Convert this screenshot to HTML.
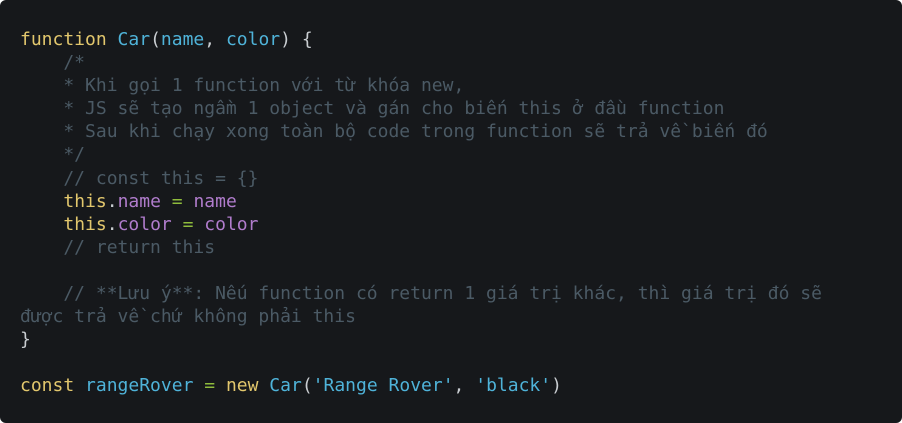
<!DOCTYPE html>
<html><head><meta charset="utf-8"><style>
html,body{margin:0;padding:0;background:#fff;width:902px;height:423px;overflow:hidden}
.box{position:absolute;left:0;top:0;width:902px;height:423px;background:#16181b;border-radius:6px}
pre{position:absolute;left:20px;top:28px;margin:0;font-family:"DejaVu Sans Mono","Liberation Mono",monospace;font-size:18px;line-height:23.1px;color:#c9cdd1;white-space:pre}
.k{color:#e2c76d}.f{color:#4fb3d9}.c{color:#4b5a65}.p{color:#b07ccc}.o{color:#8fbc3c}.s{color:#4fb3d9}
</style></head><body><div class="box"></div><pre><span class="k">function</span> <span class="f">Car</span>(<span class="f">name</span>, <span class="f">color</span>) {
<span class="c">    /*
    * Khi gọi 1 function với từ khóa new,
    * JS sẽ tạo ngầm 1 object và gán cho biến this ở đầu function
    * Sau khi chạy xong toàn bộ code trong function sẽ trả về biến đó
    */
    // const this = {}</span>
    <span class="k">this</span>.<span class="p">name</span> <span class="o">=</span> <span class="p">name</span>
    <span class="k">this</span>.<span class="p">color</span> <span class="o">=</span> <span class="p">color</span>
<span class="c">    // return this

    // **Lưu ý**: Nếu function có return 1 giá trị khác, thì giá trị đó sẽ
được trả về chứ không phải this</span>
}

<span class="k">const</span> <span class="f">rangeRover</span> <span class="o">=</span> <span class="k">new</span> <span class="f">Car</span>(<span class="s">'Range Rover'</span>, <span class="s">'black'</span>)</pre></body></html>
